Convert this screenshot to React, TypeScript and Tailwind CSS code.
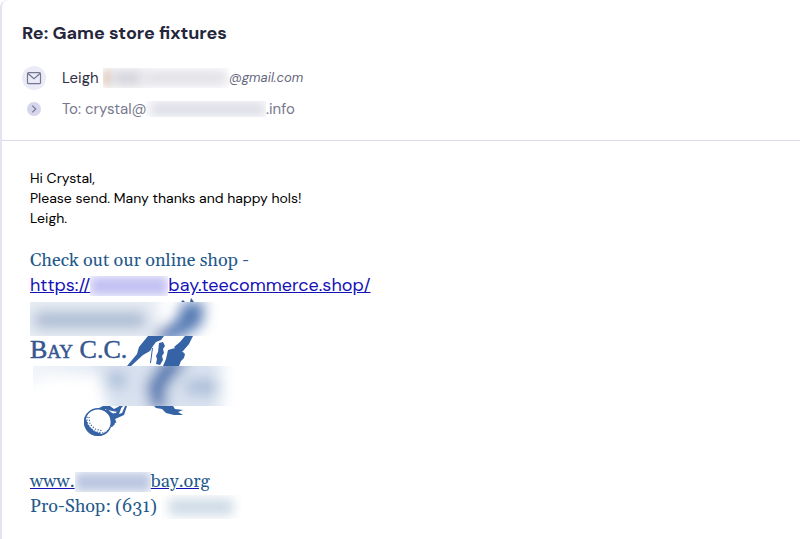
import React from 'react';
import clsx from 'clsx';

interface RedactedProps {
  className?: string;
  children: React.ReactNode;
}

// A clipped strip with soft smudges inside, standing in for hidden text
const Redacted: React.FC<RedactedProps> = ({ className, children }) => (
  <span aria-hidden="true" className={clsx('flex shrink-0 items-center overflow-hidden', className)}>
    {children}
  </span>
);

const EnvelopeIcon = () => (
  <svg viewBox="0 0 24 24" className="h-6 w-6" fill="none" aria-hidden="true">
    <circle cx="12" cy="12" r="12" fill="#ebebf8" />
    <rect x="5.5" y="6.7" width="13" height="11" rx="1.3" stroke="#74768f" strokeWidth="1.2" />
    <path d="M6 7.5l6 5.2 6-5.2" stroke="#74768f" strokeWidth="1.2" strokeLinejoin="round" />
  </svg>
);

const ChevronIcon = () => (
  <svg viewBox="0 0 14 14" className="h-3.5 w-3.5" fill="none" aria-hidden="true">
    <circle cx="7" cy="7" r="7" fill="#d5d5ec" />
    <path d="M5.2 3.7L8.8 7l-3.6 3.3" stroke="#74768f" strokeWidth="1.1" />
  </svg>
);

const ClubLogo = () => (
  <svg viewBox="0 0 210 144" className="block h-36 w-[210px]" role="img" aria-label="Bay C.C.">
    <defs>
      <filter id="soft" x="-30%" y="-60%" width="160%" height="220%">
        <feGaussianBlur stdDeviation="7" />
      </filter>
      <linearGradient id="fade" x1="0" x2="1">
        <stop offset="0" stopColor="#fff" stopOpacity="0.5" />
        <stop offset="0.3" stopColor="#fff" />
        <stop offset="0.85" stopColor="#fff" />
        <stop offset="1" stopColor="#fff" stopOpacity="0" />
      </linearGradient>
      <mask id="lowerMask">
        <rect x="3" y="68" width="205" height="40" fill="url(#fade)" />
      </mask>
      <clipPath id="upper">
        <rect y="4" width="200" height="34" />
      </clipPath>
      <clipPath id="ball">
        <circle cx="68" cy="124" r="14" />
      </clipPath>
    </defs>

    <g clipPath="url(#upper)">
      <g filter="url(#soft)">
        <path d="M-20-10h150v60H-20z" fill="#e9eef5" />
        <path d="M4 13h112v18H4z" fill="#aabbd2" />
        <path d="M154 4h20l-2 22-18 12-30 10 4-16 18-8z" fill="#5076b1" />
      </g>
    </g>
    <path d="M151 4l2-2 2 2zM160 4l1-4 3 4z" fill="#3c5f9c" />

    <text x="0" y="60" fill="#34578f" stroke="#34578f" strokeWidth="0.5" fontFamily="'Liberation Serif', serif" fontSize="26">
      B<tspan fontSize="19">AY</tspan> C.C.
    </text>

    <g fill="#3563a5">
      <path d="M118 38h16l-3 4-5 2-3 4-3 5-7 4-12 11h-4l10-12 2-7z" />
      <path d="M129 45l4-1 2 4-2 3 1 4-2 3 1 4-3 5-4-1 1-5-1-3 2-4z" />
      <path d="M122 50h1l-2 15h-1z" />
      <path d="M155 38h8l-4 8-6 7-6-1-3-3 6-5zM138 52l7-2 5 1 5 5-1 4-3 3-2 5h-16l3-7z" />
    </g>

    <g mask="url(#lowerMask)">
      <g filter="url(#soft)">
        <path d="M-20 55h110v22H20l-40 20z" fill="#e3eaf4" />
        <path d="M64 50h134v70H80z" fill="#d9e2ef" />
        <path d="M134 60h26l-18 22-8 12 4 12-14 10-8-28z" fill="#4c74b0" />
        <path d="M76 74h20v16H80z" fill="#a9bcd9" />
        <path d="M156 82h36v14h-36z" fill="#a6b9d7" />
      </g>
    </g>

    <g fill="#3563a5">
      <path d="M124 108h19l2 3 8 1-5 2 5 3h-9l-8-2-4-4-6-1z" />
      <path d="M73 108h7l4 3 6-3h3l-5 6-6-1-7-2 3 5 8-1 3-7h3l-3 8 3-1 3-7h2l-3 9-11 5 2 4-3 3-3-1-2-6-4-6-8-4z" />
    </g>
    <circle cx="68" cy="124" r="13.3" fill="#fff" stroke="#3563a5" strokeWidth="1.4" />
    <g clipPath="url(#ball)">
      <path d="M52 116l5-2-1 7 2 6 6 6 8 3 10-4-2 10H52z" fill="#3563a5" />
      <path
        d="M57 116v8l3 6 6 4 8 1 6-4M59 119l1 7 5 5 8 2"
        fill="none"
        stroke="#3563a5"
        strokeWidth="1.2"
        strokeDasharray="1.2 1.6"
      />
    </g>
    <path d="M76 112l6 5 3 8" fill="none" stroke="#3563a5" strokeWidth="3" />
  </svg>
);

export default function App() {
  return (
    <main className="min-h-screen rounded-tl-lg border-l-2 border-[#e5e3f2] bg-white font-['DM_Sans',Inter,sans-serif]">
      <header className="border-b border-[#dddbe9] px-5 pt-5 pb-[21px]">
        <h1 className="text-lg leading-[26px] font-bold text-[#25263b]">Re: Game store fixtures</h1>

        <div className="mt-5 flex h-6 items-center">
          <div className="flex w-10 shrink-0">
            <EnvelopeIcon />
          </div>
          <span className="w-[41px] shrink-0 text-[15px] text-[#303044]">Leigh</span>
          <Redacted className="h-5 w-[126px]">
            <span className="h-4 w-2 shrink-0 bg-[#dfc0ad] blur-[4px]" />
            <span className="h-4 w-8 shrink-0 bg-[#d2d2da] blur-[6px]" />
            <span className="h-3.5 w-[84px] shrink-0 bg-[#dddde4] blur-[6px]" />
          </Redacted>
          <em className="text-[13px] text-[#65667c]">@gmail.com</em>
        </div>

        <div className="mt-[9px] flex h-5 items-center">
          <div className="flex w-10 shrink-0 pl-[5px]">
            <ChevronIcon />
          </div>
          <span className="w-[84px] shrink-0 text-[15px] whitespace-nowrap text-[#77788d]">To: crystal@</span>
          <Redacted className="h-4 w-[120px]">
            <span className="ml-1 h-3.5 w-full bg-[#d9dae4] blur-[6px]" />
          </Redacted>
          <span className="text-[15px] text-[#77788d]">.info</span>
        </div>
      </header>

      <article className="px-7 pt-[27px]">
        <p className="text-sm leading-5 text-black">
          Hi Crystal,
          <br />
          Please send. Many thanks and happy hols!
          <br />
          Leigh.
        </p>

        <section className="mt-5 text-lg leading-[25px] text-[#24598b]">
          <p className="font-[Gelasio,'Liberation_Serif',serif]">Check out our online shop -</p>
          <a href="#shop" className="flex w-fit items-center text-[#1512b5] underline">
            https://
            <Redacted className="h-5 w-[78px]">
              <span className="h-5 w-full bg-[#c4c2f3] blur-[5px]" />
            </Redacted>
            bay.teecommerce.shop/
          </a>
        </section>

        <ClubLogo />

        <section className="mt-[27px] font-[Gelasio,'Liberation_Serif',serif] text-lg leading-[25px] text-[#24598b]">
          <a href="#website" className="flex w-fit items-center underline decoration-[#1512b5]">
            www.
            <Redacted className="h-5 w-[76px]">
              <span className="h-5 w-full bg-[#bcc7e1] blur-[5px]" />
            </Redacted>
            bay.org
          </a>
          <p className="flex items-center">
            Pro-Shop: (631)
            <Redacted className="ml-1 h-6 w-20">
              <span className="ml-2 h-4 w-16 shrink-0 bg-[#cbd9e5] blur-[6px]" />
            </Redacted>
          </p>
        </section>
      </article>
    </main>
  );
}
